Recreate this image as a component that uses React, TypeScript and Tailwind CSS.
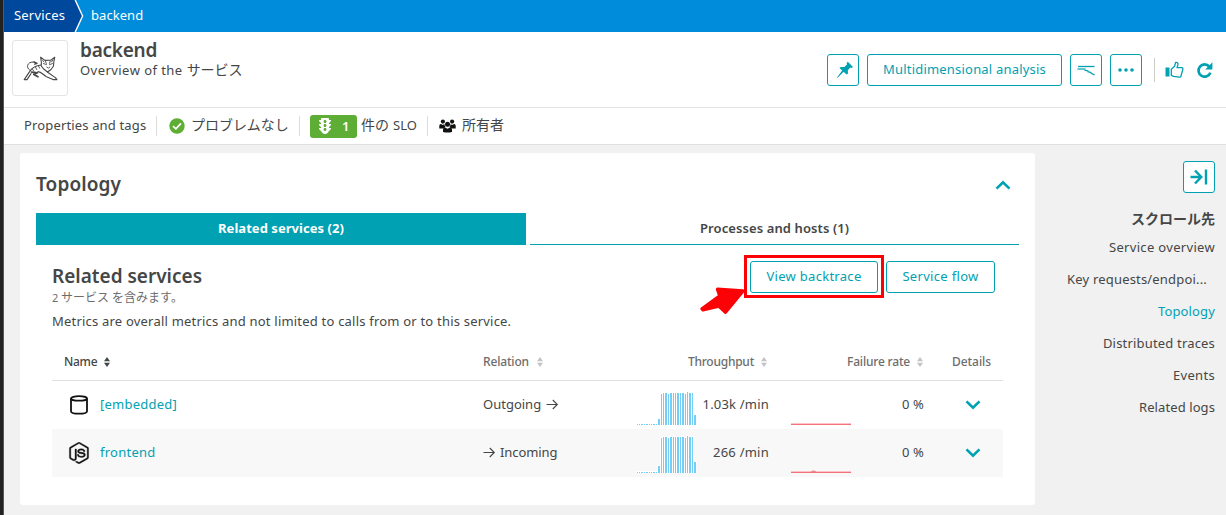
import React from "react";
import { FaNodeJs, FaTrafficLight } from "react-icons/fa";

const teal = "#00a1b2";

function Pin() {
  return (
    <svg className="ml-1" width="18" height="18" viewBox="0 0 18 18" fill={teal}>
      <path d="M11.8 0.8 L17 6.1 L15.4 7 L14.3 6.6 L11.8 9.3 L12 12.6 L10.6 13.6 L7.6 10.7 L1.4 16.9 L1 16.6 L6.2 9.5 L3.4 7 L4.9 5.9 L8.3 6 L11 3.6 L10.7 2 Z" />
    </svg>
  );
}

function Thumb() {
  return (
    <svg width="19" height="18" viewBox="0 0 19 18" fill="none">
      <path d="M0.5 6.5h4v9h-4z" fill={teal} />
      <path d="M6.3 8.2 L9.6 5.2 L10.6 1.5 C12.6 1.1 13.2 2.4 12.9 3.8 L12 6.6 H17 C17.9 6.6 18.1 7.6 17.8 8.4 L16 15 C15.8 15.8 15.2 16.2 14.4 16.1 L8.6 15.4 L6.3 14.4 Z" stroke={teal} strokeWidth="1.3" strokeLinejoin="round" />
    </svg>
  );
}

function Refresh() {
  return (
    <svg width="17" height="17" viewBox="0 0 17 17" fill="none">
      <path d="M13.3 4.6 A6.1 6.1 0 1 0 14.4 10.6" stroke={teal} strokeWidth="2.7" />
      <path d="M16.4 0.2 V7.6 H9.2 Z" fill={teal} />
    </svg>
  );
}

function Waterfall() {
  return (
    <svg width="18" height="12" viewBox="0 0 18 12" fill="none" stroke={teal}>
      <path d="M1 2.5h16.5" strokeWidth="1.3" />
      <path d="M0.5 5h8" strokeWidth="1.2" />
      <path d="M7.5 6.2l4 1M10.5 7.6l4 1M13.5 9l4 1.8" strokeWidth="1.3" />
    </svg>
  );
}

function Group() {
  return (
    <svg width="17" height="14" viewBox="0 0 17 14" fill="#111">
      <circle cx="3.9" cy="2.6" r="2.1" />
      <circle cx="13.1" cy="2.6" r="2.1" />
      <circle cx="8.5" cy="5.2" r="2.5" />
      <path d="M0.3 9.5 V6.7 Q0.3 5 2 5 L3.9 6 L5.3 5.1 Q5.6 7.2 6.6 8 L4.6 9.6 Z" />
      <path d="M16.7 9.5 V6.7 Q16.7 5 15 5 L13.1 6 L11.7 5.1 Q11.4 7.2 10.4 8 L12.4 9.6 Z" />
      <path d="M4 13 V10.6 Q4.2 8.7 6 8.5 L8.5 9.7 L11 8.5 Q12.8 8.7 13 10.6 V13 Q8.5 14.2 4 13Z" />
    </svg>
  );
}

function Tomcat() {
  return (
    <svg width="36" height="28" viewBox="0 0 36 28" fill="none" stroke="#484848" strokeLinecap="round" strokeLinejoin="round">
      <path d="M18.6 2.2 L19.4 7.5 L19.2 11 L22 14.3 L25.5 17 L29 14.5 L31.5 11 L31.8 7 L32.8 2.2 L28.8 5.2 L23 5.4 Z" strokeWidth="1.1" />
      <path d="M20.4 5 L22 7 M31 5 L29.5 7 M21.5 8.6 L24.5 9.6 M27.5 9.6 L30.5 8.6 M24.8 12 L26.3 13.2 L27.8 12 M23.4 6.4 L24.4 8.4 M28.2 6.4 L27.4 8.4" strokeWidth="0.9" />
      <path d="M14.6 8.4 C12.5 6.6 9.5 6.6 7.4 8 C4.6 10 4.8 13.6 8.6 15.6" strokeWidth="1" />
      <path d="M12 7 L15 8.4 L12.8 9.2" strokeWidth="1.4" />
      <path d="M19 10 C14 10.6 10 12.6 7.6 16.6 L2.2 24.6 H5 L9 18.6" strokeWidth="1.1" />
      <path d="M16 16.6 C19 16.8 21 19.4 24 21.4 L31 24.6 H35 L33.4 22.6 L25.6 17.2" strokeWidth="1.1" />
      <path d="M9.6 17.2 L15.4 17.8 L11.8 19.4 L16 21.8" strokeWidth="1.7" />
      <path d="M13.5 12.2 L14.8 14.6 M16.6 11.2 L17.6 13.2 M10.6 14.4 L11.8 16.2" strokeWidth="0.9" />
    </svg>
  );
}

function Database() {
  return (
    <svg width="20" height="20" viewBox="0 0 20 20" fill="none" stroke="#111" strokeWidth="1.8">
      <ellipse cx="10" cy="3.4" rx="8" ry="2.3" />
      <path d="M2 3.4 V16.2 C2 17.7 5.5 18.7 10 18.7 S18 17.7 18 16.2 V3.4" />
    </svg>
  );
}

function Arrow() {
  return (
    <svg width="13" height="11" viewBox="0 0 13 11" fill="none" stroke="#454646" strokeWidth="1.1">
      <path d="M0.5 5.5 H11.5 M6.8 1 L11.3 5.5 L6.8 10" />
    </svg>
  );
}

function Chevron({ up = false }: { up?: boolean }) {
  return (
    <svg width="16" height="10" viewBox="0 0 16 10" fill="none" stroke={teal} strokeWidth="2.6">
      <path d={up ? "M1.5 8.6 L8 2.2 L14.5 8.6" : "M1.5 1.4 L8 7.8 L14.5 1.4"} />
    </svg>
  );
}

function Sort({ color }: { color: string }) {
  return (
    <svg width="6" height="10" viewBox="0 0 6 10" fill={color}>
      <path d="M3 0 L6 4.2 H0 Z M0 5.8 H6 L3 10 Z" />
    </svg>
  );
}

const OUTGOING = [1, 1, 1, 1, 1, 1, 1, 1, 1, 6, 31, 32, 32, 31, 32, 32, 32, 32, 32, 32, 31, 33, 32, 32, 10];
const INCOMING = [1, 1, 1, 1, 1, 1, 1, 1, 1, 7, 35, 36, 36, 35, 36, 36, 36, 36, 36, 36, 35, 37, 36, 36, 11];

function Sparkbars({ data }: { data: number[] }) {
  const bars = data.map((h, i) => {
    const x = Math.floor(i * 2.4);
    return { x, w: Math.floor((i + 1) * 2.4) - x - 1, h };
  });
  return (
    <svg width="62" height="40" viewBox="-1 -2 62 40" shapeRendering="crispEdges">
      {bars.map((b) => (
        <rect key={`h${b.x}`} x={b.x - 1} y={36 - b.h} width={b.w + 2} height={b.h + 1} fill="#fff" />
      ))}
      {bars.map((b) => (
        <rect key={b.x} x={b.x} y={37 - b.h} width={b.w} height={b.h} fill="#74cff7" />
      ))}
    </svg>
  );
}

function FailureLine({ bump }: { bump: boolean }) {
  return (
    <svg width="60" height="4" viewBox="0 0 60 4" shapeRendering="crispEdges">
      <rect y="2" width="60" height="1" fill="#fbc3c7" />
      <rect y="3" width="60" height="1" fill="#f3717b" />
      {bump && <rect x="21" y="1" width="3" height="1" fill="#f9c5c8" />}
      {bump && <rect x="20" y="2" width="5" height="1" fill="#e58f96" />}
    </svg>
  );
}

const COLS = "grid grid-cols-[419px_154px_156px_155px_67px]";

function Row({ icon, name, nameClass, relation, data, rate, rateClass, shaded = false }: {
  icon: React.ReactNode; name: string; nameClass: string; relation: React.ReactNode; data: number[]; rate: string; rateClass: string; shaded?: boolean;
}) {
  return (
    <div className={`${COLS} h-12 ${shaded ? "bg-[#f8f8f8]" : "bg-white"}`}>
      <div className="flex items-center pl-4">
        <span className="flex w-[22px] justify-center">{icon}</span>
        <a className={`ml-[10px] pb-0.5 text-[#00a1b2] ${nameClass}`}>{name}</a>
      </div>
      <div className="flex items-center pb-0.5 pl-3">{relation}</div>
      <div className="flex justify-between pr-3 pl-[11px]">
        <div className="self-end pb-[3px]"><Sparkbars data={data} /></div>
        <span className={`self-center pb-0.5 ${rateClass}`}>{rate}</span>
      </div>
      <div className="flex justify-between pr-3 pl-[10px]">
        <div className="self-end pb-1"><FailureLine bump={shaded} /></div>
        <span className="self-center pb-0.5 tracking-[0.15px]">0 %</span>
      </div>
      <div className="flex items-center justify-center pl-[7px]"><Chevron /></div>
    </div>
  );
}

const outline = "flex h-8 shrink-0 items-center justify-center rounded-[3px] border border-[#00a1b2] bg-white text-[#00a1b2]";
const divider = "w-px bg-[#dcdcdc]";

export default function App() {
  return (
    <div className="flex h-[515px] w-[1226px] overflow-hidden bg-[#f1f1f1] font-['Noto_Sans','Noto_Sans_CJK_JP',sans-serif] text-[13px] leading-4 whitespace-nowrap text-[#454646] [&_svg]:block [&_svg]:shrink-0">
      <div className="w-1 shrink-0 border-r border-[#565656] bg-[#242221]" />
      <div className="flex min-w-0 flex-1 flex-col">
        <nav className="flex h-8 shrink-0 bg-[#008cdb] text-white">
          <div className="flex w-[70px] items-center bg-[#00489b] pb-0.5 pl-[10px] tracking-[0.2px]">Services</div>
          <svg width="10" height="32" viewBox="0 0 10 32">
            <path d="M0 0 L1.4 0 L8.4 16 L1.4 32 L0 32 Z" fill="#00489b" />
            <path d="M1.2 0 L8.6 16 L1.2 32" fill="none" stroke="#fff" strokeWidth="1.4" />
          </svg>
          <div className="flex items-center pb-0.5 pl-[7px] tracking-[0.05px]">backend</div>
        </nav>

        <header className="flex h-[76px] shrink-0 border-b border-[#e4e4e4] bg-white pt-2 pr-[13px] pl-2">
          <div className="flex h-14 w-14 items-center justify-center rounded-[3px] border border-[#e4e4e4] pt-0.5"><Tomcat /></div>
          <div className="ml-3 flex flex-1 flex-col">
            <h1 className="h-[20px] text-[19px] leading-[21px] font-semibold tracking-[-0.25px]">backend</h1>
            <div className="flex h-5 items-center gap-1">
              <span className="tracking-[0.45px]">Overview of the</span>
              <span className="text-[14px]">サービス</span>
            </div>
          </div>
          <div className="flex h-8 items-center gap-2 self-start pt-[28px]">
            <button className={`${outline} w-8`}><Pin /></button>
            <button className={`${outline} w-[195px] pb-0.5 tracking-[0.2px]`}>Multidimensional analysis</button>
            <button className={`${outline} w-8`}><Waterfall /></button>
            <button className={`${outline} w-8`}>
              <svg width="16" height="4" viewBox="0 0 16 4" fill={teal}><circle cx="2" cy="2" r="1.8" /><circle cx="8" cy="2" r="1.8" /><circle cx="14" cy="2" r="1.8" /></svg>
            </button>
            <div className="ml-1 h-6 w-px bg-[#ccc]" />
            <div className="ml-[2px]"><Thumb /></div>
            <div className="ml-1"><Refresh /></div>
          </div>
        </header>

        <div className="flex h-[37px] shrink-0 items-center border-b border-[#e0e0e0] bg-white pl-5">
          <span className="w-[132px] pb-0.5 tracking-[0.15px]">Properties and tags</span>
          <div className={`${divider} h-5`} />
          <svg className="ml-3" width="16" height="16" viewBox="0 0 16 16">
            <circle cx="8" cy="8" r="7.7" fill="#5ead35" />
            <path d="M4 8.2 L6.9 10.9 L12 5.4" fill="none" stroke="#fff" strokeWidth="1.7" />
          </svg>
          <span className="ml-[6px] w-[108px] pb-0.5 text-[14px]">プロブレムなし</span>
          <div className={`${divider} h-5`} />
          <div className="ml-[10px] flex h-[23px] w-[47px] items-center rounded-[3px] bg-[#5ead35] pl-1.5 text-white">
            <FaTrafficLight className="h-4 w-[18px]" />
            <span className="ml-2 pb-px font-semibold">1</span>
          </div>
          <span className="ml-1 pb-0.5 text-[14px]">件の</span>
          <span className="ml-1 w-[34px] pb-0.5">SLO</span>
          <div className={`${divider} h-5`} />
          <div className="ml-[11px] pb-px"><Group /></div>
          <span className="ml-[6px] pb-0.5 text-[14px]">所有者</span>
        </div>

        <div className="flex flex-1 pt-2 pl-4">
          <main className="h-[352px] w-[1015px] shrink-0 rounded-[3px] bg-white px-4">
            <div className="flex h-[60px] items-center justify-between pt-[3px] pr-2">
              <h2 className="pb-0.5 text-[19px] leading-6 font-semibold tracking-[0.1px]">Topology</h2>
              <Chevron up />
            </div>
            <div className="flex gap-1">
              <div className="flex h-8 w-[490px] items-center justify-center bg-[#00a1b2] pb-0.5 font-bold tracking-[0.05px] text-white">Related services (2)</div>
              <div className="flex h-8 w-[489px] items-center justify-center border-b border-[#00a1b2] pb-px font-semibold tracking-[0.1px]">Processes and hosts (1)</div>
            </div>
            <section className="px-4">
              <div className="flex h-[67px] justify-between pt-4 pr-2">
                <div className="flex flex-col">
                  <h3 className="h-[29px] text-[19px] leading-[30px] font-semibold">Related services</h3>
                  <div className="flex h-4 items-center text-[12px] text-[#6d6d6d]">
                    <span className="w-[9px] text-[11px]">2</span>
                    <span>サービス を含みます。</span>
                  </div>
                </div>
                <div className="flex gap-2">
                  <div className="relative h-8">
                    <button className={`${outline} w-32 pb-0.5 tracking-[0.29px]`}>View backtrace</button>
                    <div className="absolute -top-[6px] -left-[6px] h-[43px] w-[140px] border-[3px] border-[#fb0207]" />
                    <svg className="absolute top-[24px] -left-[52px]" width="50" height="32" viewBox="0 0 50 32">
                      <path d="M45 6 L19.5 4.3 L21.8 11 L4 23.8 L5 24.8 L20.8 21 L27.5 27.2 Z" fill="#fb0207" stroke="#fb0207" strokeWidth="3.4" strokeLinejoin="round" />
                    </svg>
                  </div>
                  <button className={`${outline} w-[109px] pb-0.5 tracking-[0.32px]`}>Service flow</button>
                </div>
              </div>
              <p className="h-[31px] pt-[1px] tracking-[0.205px]">Metrics are overall metrics and not limited to calls from or to this service.</p>
              <div className={`${COLS} h-[38px] items-center border-b border-[#e0e0e0] text-[12px] font-medium text-[#6d6d6d]`}>
                <div className="flex items-center gap-[7px] pl-3 text-[#454646]"><span className="tracking-[-0.3px]">Name</span><Sort color="#454646" /></div>
                <div className="flex items-center gap-2 pl-3"><span className="tracking-[-0.16px]">Relation</span><Sort color="#c4c4c4" /></div>
                <div className="flex items-center justify-end gap-[7px] pr-[14px]"><span className="tracking-[-0.25px]">Throughput</span><Sort color="#c4c4c4" /></div>
                <div className="flex items-center justify-end gap-[7px] pr-[13px]"><span className="tracking-[-0.19px]">Failure rate</span><Sort color="#c4c4c4" /></div>
                <div className="pl-4 tracking-[-0.06px]">Details</div>
              </div>
              <Row
                icon={<Database />}
                name="[embedded]"
                nameClass="tracking-[0.23px]"
                relation={<span className="flex items-center gap-[5px]">Outgoing <Arrow /></span>}
                data={OUTGOING}
                rate="1.03k /min"
                rateClass="tracking-[0.2px]"
              />
              <Row
                shaded
                icon={<FaNodeJs size={22} color="#111" stroke="#111" strokeWidth={8} />}
                name="frontend"
                nameClass="tracking-[0.25px]"
                relation={<span className="flex items-center gap-1 tracking-[-0.1px]"><Arrow /> Incoming</span>}
                data={INCOMING}
                rate="266 /min"
                rateClass="tracking-[0.24px]"
              />
            </section>
          </main>

          <aside className="flex flex-1 flex-col items-end pt-2 pr-[11px]">
            <button className={`${outline} w-8`}>
              <svg width="18" height="16" viewBox="0 0 18 16" fill="none" stroke={teal} strokeWidth="2.4">
                <path d="M0.5 8 H11 M5 1.5 L11.3 8 L5 14.5 M16 0.5 V15.5" />
              </svg>
            </button>
            <h4 className="mt-[18px] text-[14px] font-bold">スクロール先</h4>
            <div className="mt-1 flex flex-col items-end leading-8">
              <a className="tracking-[0.32px]">Service overview</a>
              <a className="mr-2 tracking-[0.18px]">Key requests/endpoi...</a>
              <a className="tracking-[0.14px] text-[#00a1b2]">Topology</a>
              <a className="tracking-[0.18px]">Distributed traces</a>
              <a className="tracking-[0.31px]">Events</a>
              <a className="tracking-[0.09px]">Related logs</a>
            </div>
          </aside>
        </div>
      </div>
    </div>
  );
}
